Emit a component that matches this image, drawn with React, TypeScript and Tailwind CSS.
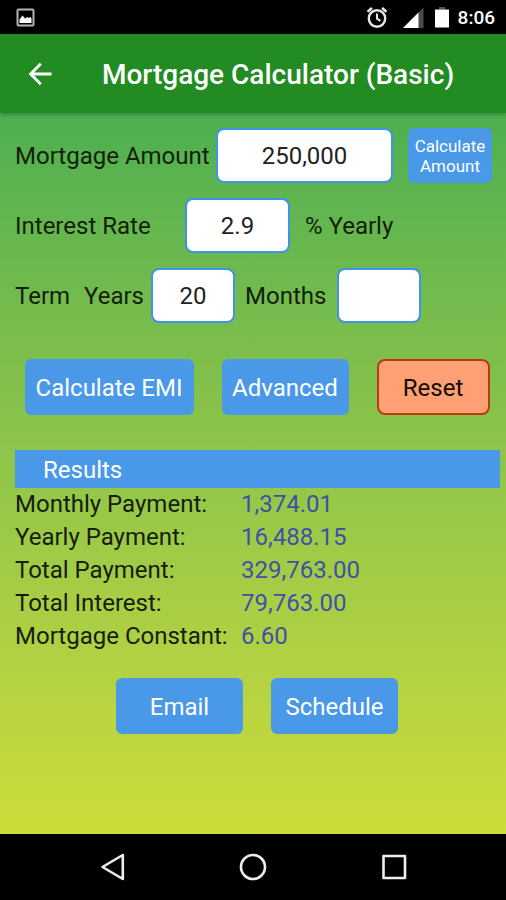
import { useState } from 'react';

const fieldClass =
  'h-[55px] min-w-0 rounded-lg border-2 border-[#3f93e8] bg-white text-center text-2xl text-[#222222] outline-none';
const buttonClass = 'rounded-md bg-[#4a98e8] pt-0.5 text-2xl text-white';

const results = [
  { label: 'Monthly Payment:', value: '1,374.01' },
  { label: 'Yearly Payment:', value: '16,488.15' },
  { label: 'Total Payment:', value: '329,763.00' },
  { label: 'Total Interest:', value: '79,763.00' },
  { label: 'Mortgage Constant:', value: '6.60' },
];

function StatusBar() {
  return (
    <div className="flex h-[34px] items-center justify-between bg-black pr-[11px] pl-4 text-white">
      <svg width="19" height="19" viewBox="0 0 19 19" aria-hidden="true">
        <rect x="1.5" y="1.5" width="16" height="16" rx="1" fill="none" stroke="#b4b4b4" strokeWidth="2" />
        <path d="M3.5 15V11.500L6.500 7.500l2.500 3 2.500-1.500 1.500 1 1.500-1 1 1.500v4.500z" fill="#fff" />
      </svg>
      <div className="flex items-center">
        <svg width="22" height="22" viewBox="0 0 22 22" fill="none" stroke="#e8e8e8" aria-hidden="true">
          <circle cx="11" cy="12.500" r="8.200" strokeWidth="2.400" />
          <path d="M11 7.500v5.200l3.400 2.200" strokeWidth="2" />
          <path d="M1.500 5.700L6 2M20.500 5.700L16 2" strokeWidth="2.600" />
        </svg>
        <svg className="ml-3.5" width="22" height="22" viewBox="0 0 22 22" aria-hidden="true">
          <path d="M1 22L21.500 1.500V22z" fill="#4a4a4a" />
          <path d="M1 22L16.500 6.500V22z" fill="#fff" />
        </svg>
        <svg className="ml-2.5" width="16" height="22" viewBox="0 0 16 22" aria-hidden="true">
          <path d="M5 1h6v2.500H5z" fill="#555" />
          <path d="M1 3.500h14v18H1z" fill="#fff" />
        </svg>
        <span className="ml-2 pt-0.5 text-[19px] leading-8 font-medium">8:06</span>
      </div>
    </div>
  );
}

function Header() {
  return (
    <header className="relative z-10 flex h-[79px] items-center bg-[#228b22] pt-0.5 pr-4 pl-[27px] text-white shadow-[0_2px_4px_rgba(0,0,0,0.25)]">
      <button type="button" aria-label="Back" className="mb-0.5">
        <svg width="26" height="26" viewBox="0 0 26 26" fill="none" stroke="#fff" strokeWidth="2.8" aria-hidden="true">
          <path d="M24.500 13H4M13.800 2.800L3.600 13l10.200 10.200" />
        </svg>
      </button>
      <h1 className="ml-[49px] text-[28px] leading-8 font-medium whitespace-nowrap">Mortgage Calculator (Basic)</h1>
    </header>
  );
}

function NavBar() {
  return (
    <nav className="flex h-[66px] items-center justify-center gap-[112px] bg-black">
      <button type="button" aria-label="Navigate back">
        <svg width="28" height="30" viewBox="0 0 28 30" fill="none" stroke="#eee" strokeWidth="2.600" strokeLinejoin="round" aria-hidden="true">
          <path d="M23.800 3v24L3.500 15z" />
        </svg>
      </button>
      <button type="button" aria-label="Home">
        <svg width="28" height="30" viewBox="0 0 28 30" fill="none" stroke="#eee" strokeWidth="2.600" aria-hidden="true">
          <circle cx="14" cy="15" r="12" />
        </svg>
      </button>
      <button type="button" aria-label="Recent apps">
        <svg width="28" height="30" viewBox="0 0 28 30" fill="none" stroke="#eee" strokeWidth="2.600" strokeLinejoin="round" aria-hidden="true">
          <rect x="4.500" y="4" width="21.500" height="22" />
        </svg>
      </button>
    </nav>
  );
}

export default function App() {
  const [amount, setAmount] = useState('250,000');
  const [rate, setRate] = useState('2.9');
  const [years, setYears] = useState('20');
  const [months, setMonths] = useState('');

  return (
    <div className="flex min-h-screen flex-col font-['Roboto',sans-serif] text-[#14200c]">
      <StatusBar />
      <Header />
      <main className="flex-1 bg-linear-to-b from-[#4caf50] to-[#cddc39] pt-[15px] pb-6 text-2xl">
        <form className="flex flex-col gap-[15px] pr-[14px] pl-[15px]" onSubmit={(e) => e.preventDefault()}>
          <div className="flex items-center">
            <label htmlFor="amount" className="w-[201px] whitespace-nowrap">Mortgage Amount</label>
            <input id="amount" className={`${fieldClass} flex-1`} value={amount} onChange={(e) => setAmount(e.target.value)} />
            <button type="button" className="ml-[15px] h-[55px] w-[84px] rounded-md bg-[#4a98e8] text-[17px] leading-5 text-white">
              Calculate Amount
            </button>
          </div>
          <div className="flex items-center">
            <label htmlFor="rate" className="w-[170px]">Interest Rate</label>
            <input id="rate" className={`${fieldClass} w-[105px]`} value={rate} onChange={(e) => setRate(e.target.value)} />
            <span className="ml-[15px]">% Yearly</span>
          </div>
          <div className="flex items-center">
            <span className="w-[69px]">Term</span>
            <label htmlFor="years" className="w-[67px]">Years</label>
            <input id="years" className={`${fieldClass} w-[84px]`} value={years} onChange={(e) => setYears(e.target.value)} />
            <label htmlFor="months" className="ml-[10px] w-[92px]">Months</label>
            <input id="months" className={`${fieldClass} w-[84px]`} value={months} onChange={(e) => setMonths(e.target.value)} />
          </div>
        </form>

        <div className="mt-9 flex justify-center gap-7 pl-2">
          <button type="button" className={`${buttonClass} h-14 w-[169px]`}>Calculate EMI</button>
          <button type="button" className={`${buttonClass} h-14 w-[127px]`}>Advanced</button>
          <button type="button" className="h-14 w-[113px] rounded-lg border-2 border-[#b83c0c] bg-[#ffa074] pt-0.5 text-2xl text-[#140a04]">Reset</button>
        </div>

        <section className="mt-[35px] pr-[6px] pl-[15px]">
          <h2 className="h-[38px] bg-[#4a98e8] pl-7 text-2xl leading-[41px] text-white">Results</h2>
          <table className="w-full text-left">
            <tbody>
              {results.map((row) => (
                <tr key={row.label} className="h-[33px] leading-[33px]">
                  <th scope="row" className="w-[226px] p-0 font-normal whitespace-nowrap">{row.label}</th>
                  <td className="p-0 text-[#3f51a5]">{row.value}</td>
                </tr>
              ))}
            </tbody>
          </table>
        </section>

        <div className="mt-[25px] flex justify-center gap-7 pl-2">
          <button type="button" className={`${buttonClass} h-14 w-[127px]`}>Email</button>
          <button type="button" className={`${buttonClass} h-14 w-[127px]`}>Schedule</button>
        </div>
      </main>
      <NavBar />
    </div>
  );
}
